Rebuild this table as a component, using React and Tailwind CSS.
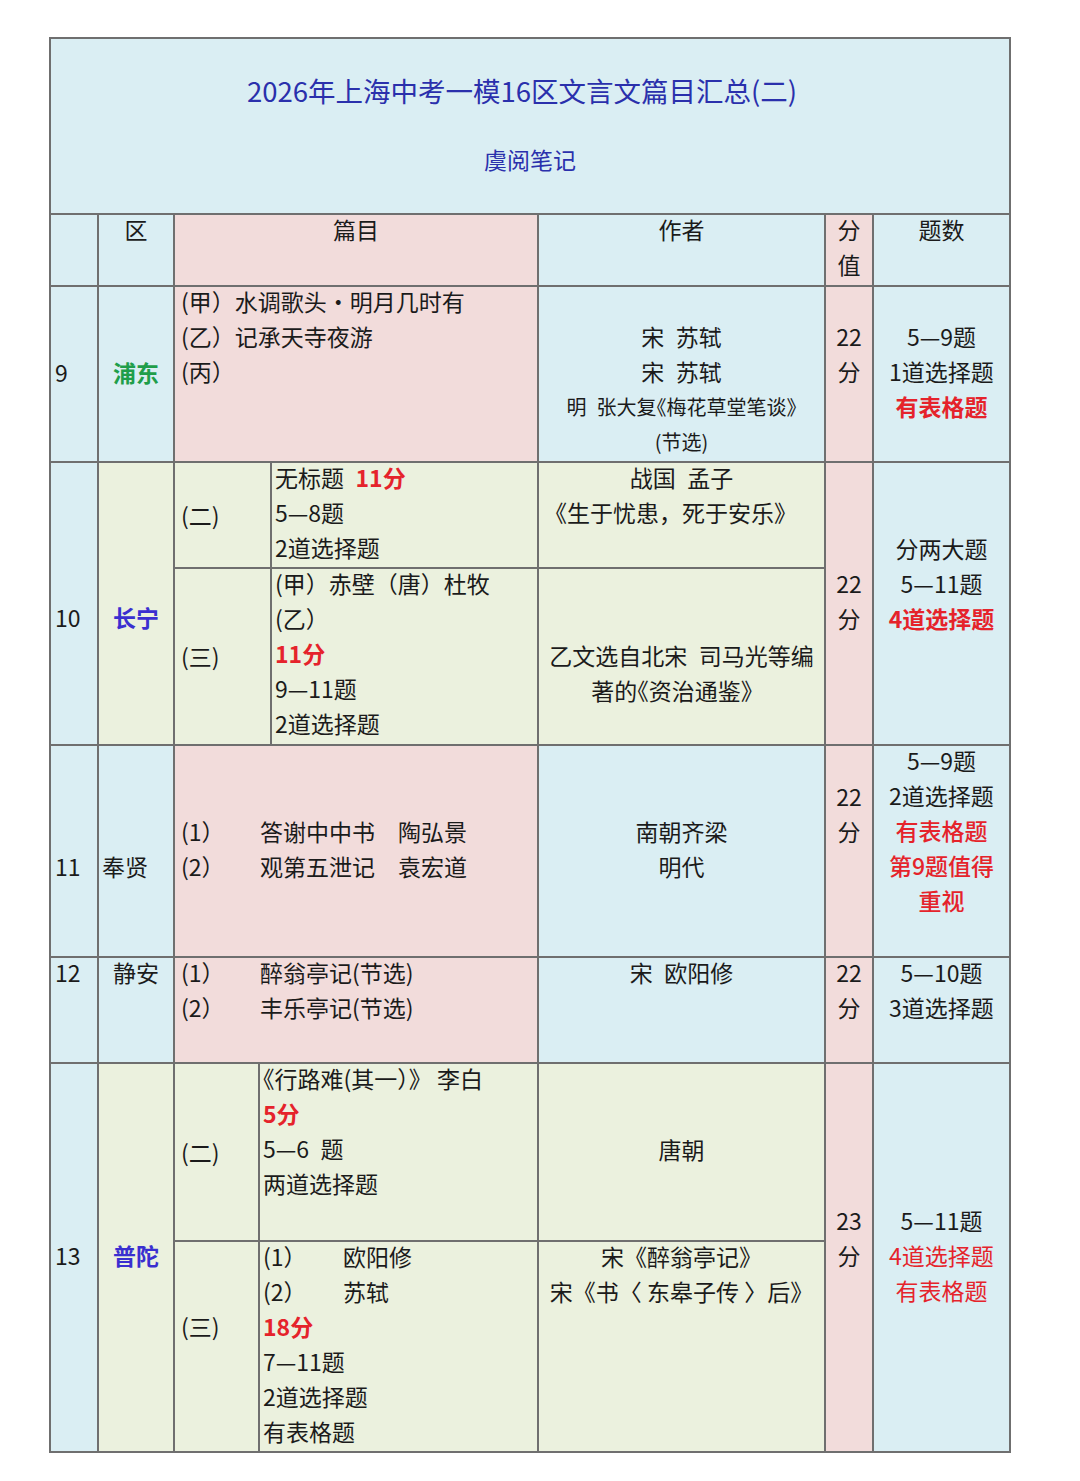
import React from "react";

const Red = ({ children, className = "font-bold" }) => (
  <span className={`text-[#e5232b] ${className}`}>{children}</span>
);

// half-width bracket, as the phone font sets it
const H = ({ children }) => (
  <span className="[font-feature-settings:'halt']">{children}</span>
);

function Cell({ className, up, children }) {
  return (
    <div className={`border-r-2 border-b-2 border-[#6f6f6f] ${className}`}>
      {up ? <div className="-mt-[3px]">{children}</div> : children}
    </div>
  );
}

function Item({ label, w, children }) {
  return (
    <div>
      <span className={`inline-block ${w}`}>{label}</span>
      {children}
    </div>
  );
}

export default function App() {
  return (
    <div className="min-h-[1481px] bg-white pt-[37px] pl-[49px] font-['Noto_Sans_CJK_SC',sans-serif] text-[23px] leading-[35px] text-[#1b1b1b]">
      <div className="grid w-fit grid-cols-[48px_76px_85px_12px_267px_287px_48px_137px] grid-rows-[176px_72px_176px_106px_177px_212px_106px_178px_211px] border-t-2 border-l-2 border-[#6f6f6f]">
        {/* title */}
        <Cell className="col-start-1 col-span-8 row-start-1 bg-[#daeef3] text-center text-[#2a30ac]">
          <div className="pt-[31px] pr-[16px] text-[27.5px] leading-[40px]">
            2026年上海中考一模16区文言文篇目汇总(二)
          </div>
          <div className="mt-[32px]">虞阅笔记</div>
        </Cell>

        {/* header */}
        <Cell className="col-start-1 row-start-2 bg-[#daeef3]" />
        <Cell up className="col-start-2 row-start-2 bg-[#daeef3] text-center">区</Cell>
        <Cell up className="col-start-3 col-span-3 row-start-2 bg-[#f2dcdb] text-center">篇目</Cell>
        <Cell up className="col-start-6 row-start-2 bg-[#daeef3] text-center">作者</Cell>
        <Cell up className="col-start-7 row-start-2 bg-[#f2dcdb] text-center">
          分<br />值
        </Cell>
        <Cell up className="col-start-8 row-start-2 bg-[#daeef3] text-center">题数</Cell>

        {/* 9 浦东 */}
        <Cell className="col-start-1 row-start-3 bg-[#daeef3] pt-[68px] pl-[4px]">9</Cell>
        <Cell className="col-start-2 row-start-3 bg-[#daeef3] pt-[68px] text-center font-bold text-[#1f9e4a]">浦东</Cell>
        <Cell up className="col-start-3 col-span-3 row-start-3 bg-[#f2dcdb] pl-[6px]">
          <div>(甲）水调歌头・明月几时有</div>
          <div>(乙）记承天寺夜游</div>
          <div>(丙）</div>
        </Cell>
        <Cell className="col-start-6 row-start-3 bg-[#daeef3] pt-[32px] text-center">
          <div>宋&ensp;苏轼</div>
          <div>宋&ensp;苏轼</div>
          <div className="text-[20px]">
            明&ensp;张大复<H>《</H>梅花草堂笔谈<H>》</H>
          </div>
          <div className="text-[20px]">(节选)</div>
        </Cell>
        <Cell className="col-start-7 row-start-3 bg-[#f2dcdb] pt-[32px] text-center">
          22<br />分
        </Cell>
        <Cell className="col-start-8 row-start-3 bg-[#daeef3] pt-[32px] text-center">
          <div>5—9题</div>
          <div>1道选择题</div>
          <div><Red>有表格题</Red></div>
        </Cell>

        {/* 10 长宁 */}
        <Cell className="col-start-1 row-start-4 row-span-2 bg-[#daeef3] pt-[137px] pl-[4px]">10</Cell>
        <Cell className="col-start-2 row-start-4 row-span-2 bg-[#ebf1de] pt-[137px] text-center font-bold text-[#3a2fd0]">长宁</Cell>
        <Cell className="col-start-3 col-span-2 row-start-4 flex items-center bg-[#ebf1de] pl-[6px]">(二)</Cell>
        <Cell up className="col-start-5 row-start-4 bg-[#ebf1de] pl-[3px]">
          <div>
            无标题&ensp;<Red>11分</Red>
          </div>
          <div>5—8题</div>
          <div>2道选择题</div>
        </Cell>
        <Cell className="col-start-3 col-span-2 row-start-5 flex items-center bg-[#ebf1de] pl-[6px]">(三)</Cell>
        <Cell up className="col-start-5 row-start-5 bg-[#ebf1de] pl-[3px]">
          <div>(甲）赤壁（唐）杜牧</div>
          <div>(乙）</div>
          <div><Red>11分</Red></div>
          <div>9—11题</div>
          <div>2道选择题</div>
        </Cell>
        <Cell up className="col-start-6 row-start-4 bg-[#ebf1de] text-center">
          <div>战国&ensp;孟子</div>
          <div className="pr-[22px]">《生于忧患，死于安乐》</div>
        </Cell>
        <Cell className="col-start-6 row-start-5 bg-[#ebf1de] pt-[69px] text-center">
          <div>乙文选自北宋&ensp;司马光等编</div>
          <div className="pr-[8px]">
            著的<H>《</H>资治通鉴》
          </div>
        </Cell>
        <Cell className="col-start-7 row-start-4 row-span-2 bg-[#f2dcdb] pt-[103px] text-center">
          22<br />分
        </Cell>
        <Cell className="col-start-8 row-start-4 row-span-2 bg-[#daeef3] pt-[68px] text-center">
          <div>分两大题</div>
          <div>5—11题</div>
          <div><Red>4道选择题</Red></div>
        </Cell>

        {/* 11 奉贤 */}
        <Cell className="col-start-1 row-start-6 bg-[#daeef3] pt-[103px] pl-[4px]">11</Cell>
        <Cell className="col-start-2 row-start-6 bg-[#daeef3] pt-[103px] pl-[3px]">奉贤</Cell>
        <Cell className="col-start-3 col-span-3 row-start-6 bg-[#f2dcdb] pt-[68px] pl-[6px]">
          <Item label="(1）" w="w-[79px]">答谢中中书&ensp;&ensp;陶弘景</Item>
          <Item label="(2）" w="w-[79px]">观第五泄记&ensp;&ensp;袁宏道</Item>
        </Cell>
        <Cell className="col-start-6 row-start-6 bg-[#daeef3] pt-[68px] text-center">
          <div>南朝齐梁</div>
          <div>明代</div>
        </Cell>
        <Cell className="col-start-7 row-start-6 bg-[#f2dcdb] pt-[33px] text-center">
          22<br />分
        </Cell>
        <Cell up className="col-start-8 row-start-6 bg-[#daeef3] text-center">
          <div>5—9题</div>
          <div>2道选择题</div>
          <div><Red className="font-medium">有表格题</Red></div>
          <div><Red className="font-medium">第9题值得</Red></div>
          <div><Red className="font-medium">重视</Red></div>
        </Cell>

        {/* 12 静安 */}
        <Cell up className="col-start-1 row-start-7 bg-[#daeef3] pl-[4px]">12</Cell>
        <Cell up className="col-start-2 row-start-7 bg-[#daeef3] text-center">静安</Cell>
        <Cell up className="col-start-3 col-span-3 row-start-7 bg-[#f2dcdb] pl-[6px]">
          <Item label="(1）" w="w-[79px]">醉翁亭记(节选)</Item>
          <Item label="(2）" w="w-[79px]">丰乐亭记(节选)</Item>
        </Cell>
        <Cell up className="col-start-6 row-start-7 bg-[#daeef3] text-center">宋&ensp;欧阳修</Cell>
        <Cell up className="col-start-7 row-start-7 bg-[#f2dcdb] text-center">
          22<br />分
        </Cell>
        <Cell up className="col-start-8 row-start-7 bg-[#daeef3] text-center">
          <div>5—10题</div>
          <div>3道选择题</div>
        </Cell>

        {/* 13 普陀 */}
        <Cell className="col-start-1 row-start-8 row-span-2 bg-[#daeef3] pt-[174px] pl-[4px]">13</Cell>
        <Cell className="col-start-2 row-start-8 row-span-2 bg-[#ebf1de] pt-[174px] text-center font-bold text-[#3a2fd0]">普陀</Cell>
        <Cell className="col-start-3 row-start-8 flex items-center bg-[#ebf1de] pl-[6px]">(二)</Cell>
        <Cell up className="col-start-4 col-span-2 row-start-8 bg-[#ebf1de] pl-[3px]">
          <div>
            <H>《</H>行路难(其一）》 李白
          </div>
          <div><Red>5分</Red></div>
          <div>5—6&ensp;题</div>
          <div>两道选择题</div>
        </Cell>
        <Cell className="col-start-3 row-start-9 bg-[#ebf1de] pt-[67px] pl-[6px]">(三)</Cell>
        <Cell up className="col-start-4 col-span-2 row-start-9 bg-[#ebf1de] pl-[3px]">
          <Item label="(1）" w="w-[80px]">欧阳修</Item>
          <Item label="(2）" w="w-[80px]">苏轼</Item>
          <div><Red>18分</Red></div>
          <div>7—11题</div>
          <div>2道选择题</div>
          <div>有表格题</div>
        </Cell>
        <Cell className="col-start-6 row-start-8 bg-[#ebf1de] pt-[68px] text-center">唐朝</Cell>
        <Cell up className="col-start-6 row-start-9 bg-[#ebf1de] text-center">
          <div>宋《醉翁亭记》</div>
          <div>宋《书〈 东皋子传 〉后》</div>
        </Cell>
        <Cell className="col-start-7 row-start-8 row-span-2 bg-[#f2dcdb] pt-[139px] text-center">
          23<br />分
        </Cell>
        <Cell className="col-start-8 row-start-8 row-span-2 bg-[#daeef3] pt-[139px] text-center">
          <div>5—11题</div>
          <div><Red className="font-normal">4道选择题</Red></div>
          <div><Red className="font-normal">有表格题</Red></div>
        </Cell>
      </div>
    </div>
  );
}
